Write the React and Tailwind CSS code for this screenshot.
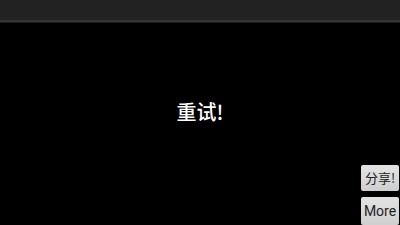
export default function App() {
  return (
    <div className="w-[400px] h-[225px] bg-black flex flex-col overflow-hidden" style={{ fontFamily: '"Noto Sans", "Noto Sans CJK SC", sans-serif' }}>
      <div className="h-[20px] bg-[#222222] shrink-0" />
      <div className="h-[2px] bg-[#363636] shrink-0" />
      <div className="h-[1px] bg-[#1a1a1a] shrink-0" />
      <div className="flex-1 flex flex-col relative">
        <div className="flex-1 flex items-center justify-center pb-[25px]">
          <span className="text-white text-[20px] font-medium leading-none" style={{ fontFamily: '"Noto Sans CJK SC", sans-serif' }}>重试!</span>
        </div>
        <div className="absolute right-[1px] top-[142px] flex flex-col gap-[6px]">
          <div className="w-[38px] h-[26px] rounded-[2px] bg-gradient-to-b from-[#e4e4e4] to-[#cfcfcf] flex items-center justify-center text-[13px] text-[#222]" style={{ fontFamily: '"Noto Sans CJK SC", sans-serif' }}>分享!</div>
          <div className="w-[38px] h-[28px] rounded-[2px] bg-gradient-to-b from-[#e4e4e4] to-[#cfcfcf] flex items-center justify-center text-[14px] text-[#222]" style={{ fontFamily: 'Roboto, sans-serif' }}>More</div>
        </div>
      </div>
    </div>
  );
}
